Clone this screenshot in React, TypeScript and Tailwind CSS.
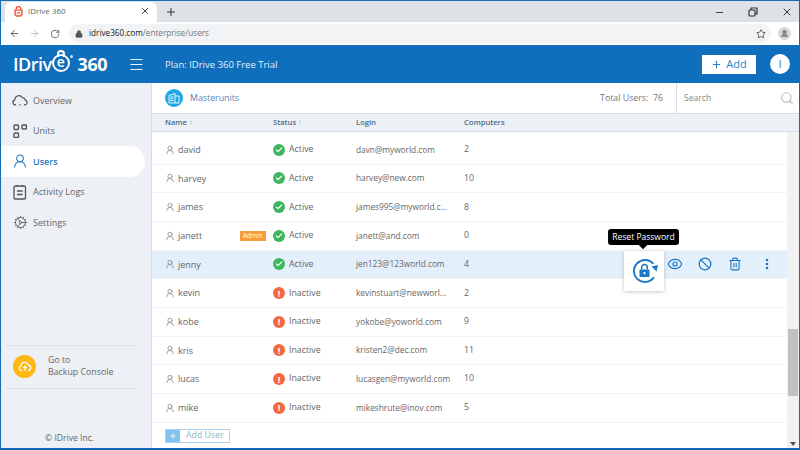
import { ArrowLeft, ArrowRight, RotateCw, Lock, Star, X, Plus, Minus, Menu, Search, Check, Eye, Ban, Trash2, EllipsisVertical, UserRound, Cog } from "lucide-react";

const users = [
  { name: "david", active: true, login: "davn@myworld.com", computers: 2 },
  { name: "harvey", active: true, login: "harvey@new.com", computers: 10 },
  { name: "james", active: true, login: "james995@myworld.c...", computers: 8 },
  { name: "janett", active: true, login: "janett@and.com", computers: 0, admin: true },
  { name: "jenny", active: true, login: "jen123@123world.com", computers: 4, hover: true },
  { name: "kevin", active: false, login: "kevinstuart@newworl...", computers: 2 },
  { name: "kobe", active: false, login: "yokobe@yoworld.com", computers: 9 },
  { name: "kris", active: false, login: "kristen2@dec.com", computers: 11 },
  { name: "lucas", active: false, login: "lucasgen@myworld.com", computers: 10 },
  { name: "mike", active: false, login: "mikeshrute@inov.com", computers: 5 },
];

function CloudIcon() {
  return (
    <svg width="16" height="13" viewBox="0 0 20 16" fill="none" stroke="#555" strokeWidth="1.5">
      <path d="M5 13.5H4a3.2 3.2 0 0 1-.4-6.3A5 5 0 0 1 13 4.6a3.4 3.4 0 0 1 3.6 3 3 3 0 0 1-.6 5.9h-1" />
      <path d="M7 13.5v.5M10 12.5v1.5M13 13.5v.5" />
    </svg>
  );
}

function UnitsIcon() {
  return (
    <svg width="14" height="14" viewBox="0 0 14 14" fill="none" stroke="#555" strokeWidth="1.4">
      <rect x="1" y="1" width="4.5" height="4.5" rx="1" />
      <rect x="9" y="1" width="4.5" height="4" rx="1" />
      <rect x="1" y="9" width="4.5" height="4.5" rx="1" />
    </svg>
  );
}

function LogsIcon() {
  return (
    <svg width="14" height="16" viewBox="0 0 14 16" fill="none" stroke="#555" strokeWidth="1.3">
      <rect x="1" y="2" width="11.5" height="13" rx="1.2" />
      <path d="M4 1v2M9.5 1v2M4 7h5.5M4 10.5h5.5" />
    </svg>
  );
}

function ResetLock() {
  return (
    <svg width="28" height="28" viewBox="0 0 28 28" fill="none">
      <path d="M23.4 6.9A11 11 0 1 0 24 20.3" stroke="#1b78c8" strokeWidth="1.9" />
      <path d="M21.5 9.5 28 8l-1.5 6.5z" fill="#1b78c8" />
      <rect x="9.5" y="12.5" width="10" height="7.5" rx="1" fill="#1b78c8" />
      <path d="M11.7 12.5v-2.2a2.8 2.8 0 0 1 5.6 0v2.2" stroke="#1b78c8" strokeWidth="1.5" />
      <circle cx="14.5" cy="16.2" r="1.1" fill="#fff" />
    </svg>
  );
}

function BuildingBadge() {
  return (
    <span className="flex h-[18px] w-[18px] items-center justify-center rounded-full bg-[#1ea7e4]">
      <svg width="12" height="12" viewBox="0 0 12 12" fill="none" stroke="#fff" strokeWidth="0.9">
        <path d="M1 3.5 7 1.5v9.5H1zM7 4h4v7H7M2.4 5h3M2.4 6.8h3M2.4 8.6h3" />
      </svg>
    </span>
  );
}

function NavItem({ label, icon, active }: { label: string; icon: React.ReactNode; active?: boolean }) {
  return (
    <div className={`mr-[6px] flex h-[30.5px] items-center rounded-r-full pl-[9px] ${active ? "bg-white font-semibold text-[#1f77bd]" : "text-[#666]"}`}>
      <span className="flex w-[20px] justify-center">{icon}</span>
      <span className="ml-[3px] text-[9px]">{label}</span>
    </div>
  );
}

export default function App() {
  return (
    <div className="flex h-[450px] w-[800px] flex-col overflow-hidden border border-b-2 border-[#0f6cb6] bg-white font-['Open_Sans',sans-serif]">
      {/* tab strip */}
      <div className="flex h-[21px] shrink-0 items-end bg-[#dee1e6]">
        <div className="ml-[4px] flex h-[20px] w-[152px] items-center rounded-t-md bg-white pb-[2px] pl-[9px] pr-[7px]">
          <svg width="9" height="11" viewBox="0 0 10 12" fill="none" stroke="#f0583a" strokeWidth="1.6">
            <path d="M2.5 4V3a2.5 2.5 0 0 1 5 0v1M1.2 4.5h7.6v5L7 11H3L1.2 9.5zM3 7.5h4" />
          </svg>
          <span className="ml-[5px] text-[8px] text-[#666]">IDrive 360</span>
          <X className="ml-auto" size={10} color="#444" strokeWidth={2.4} />
        </div>
        <Plus className="mb-[4px] ml-[8px]" size={12} color="#333" strokeWidth={2} />
        <div className="mb-[4px] ml-auto flex items-center text-[#333]">
          <Minus size={11} />
          <svg className="ml-[23px]" width="10" height="10" viewBox="0 0 10 10" fill="none" stroke="#333" strokeWidth="1.2">
            <rect x="1" y="3" width="6" height="6" rx="1" />
            <path d="M3 3V1h6v6H7" />
          </svg>
          <X className="ml-[23px] mr-[6px]" size={12} />
        </div>
      </div>
      {/* address bar */}
      <div className="flex h-[23px] shrink-0 items-center bg-white pl-[8px] pr-[8px]">
        <ArrowLeft size={11} color="#555" strokeWidth={2} />
        <ArrowRight className="ml-[9px]" size={11} color="#bbb" strokeWidth={2} />
        <RotateCw className="ml-[10px]" size={10} color="#555" strokeWidth={2} />
        <div className="ml-[9px] flex h-[19px] flex-1 items-center rounded-full bg-[#f1f3f4] pl-[6px] pr-[5px]">
          <Lock size={8} color="#555" fill="#555" />
          <span className="ml-[6px] text-[8.2px] text-[#222]">
            idrive360.com<span className="text-[#777]">/enterprise/users</span>
          </span>
          <Star className="ml-auto" size={10} color="#444" />
        </div>
        <span className="ml-[7px] flex h-[13px] w-[13px] items-center justify-center rounded-full bg-[#d8d8d8]">
          <UserRound size={9} color="#888" fill="#888" />
        </span>
      </div>
      {/* app header */}
      <div className="flex h-[38px] shrink-0 items-center bg-[#0f6fbc] pl-[12px] pr-[9px] text-white">
        <span className="flex items-center text-[18px] font-semibold leading-none tracking-[-0.5px]">
          IDriv
          <span className="relative -mt-[2px] flex h-[18px] w-[18px] items-center justify-center rounded-full border-2 border-white text-[14px] leading-none">
            <span className="-mt-[3px]">e</span>
            <span className="absolute -top-[6px] left-[3px] h-[7px] w-[8px] rounded-t-full border-2 border-b-0 border-white" />
            <span className="absolute -right-[5px] -top-[1px] h-[3px] w-[3px] rounded-full bg-[#cfe3f4]" />
          </span>
          <span className="ml-[8px] font-bold">360</span>
        </span>
        <Menu className="ml-[21px]" size={17} strokeWidth={1.3} />
        <span className="ml-[20px] mt-[2px] text-[9.5px] font-medium text-[#e3f0fa]">Plan: IDrive 360 Free Trial</span>
        <div className="ml-auto flex h-[19px] w-[54px] items-center justify-center bg-white text-[11px] text-[#2a7fc4]">
          <Plus size={11} strokeWidth={2.4} />
          <span className="ml-[4px]">Add</span>
        </div>
        <span className="ml-[14px] flex h-[20px] w-[20px] items-center justify-center rounded-full bg-white text-[11px] text-[#2a7fc4]">I</span>
      </div>
      <div className="flex min-h-0 flex-1">
        {/* sidebar */}
        <aside className="flex w-[151px] shrink-0 flex-col border-r border-[#d5dee7] bg-[#edf1f5] pt-[2px]">
          <NavItem label="Overview" icon={<CloudIcon />} />
          <NavItem label="Units" icon={<UnitsIcon />} />
          <NavItem label="Users" active icon={<UserRound size={16} color="#1f77bd" strokeWidth={1.6} />} />
          <NavItem label="Activity Logs" icon={<LogsIcon />} />
          <NavItem label="Settings" icon={<Cog size={15} color="#555" strokeWidth={1.3} />} />
          <div className="ml-[4px] mr-[13px] mt-[107px] flex h-[44px] items-center border-y border-[#dbe3ea] pl-[8px]">
            <span className="flex h-[23px] w-[23px] items-center justify-center rounded-full bg-[#fdb813]">
              <svg width="14" height="11" viewBox="0 0 14 11" fill="none" stroke="#fff" strokeWidth="1.3">
                <path d="M4 9.5H3.2A2.4 2.4 0 0 1 3 4.8 3.6 3.6 0 0 1 10 3.8a2.9 2.9 0 0 1 .6 5.7H10M7 10V5.5M5.2 7 7 5.2 8.8 7" />
              </svg>
            </span>
            <span className="ml-[12px] text-[8.8px] leading-[11.5px] text-[#666]">
              Go to
              <br />
              Backup Console
            </span>
          </div>
          <div className="mb-[3px] mt-auto pl-[44px] text-[8.6px] text-[#666]">© IDrive Inc.</div>
        </aside>
        {/* main */}
        <main className="flex min-w-0 flex-1 flex-col">
          <div className="flex h-[31px] shrink-0 items-center border-b border-[#d5dee7] pl-[13px]">
            <BuildingBadge />
            <span className="ml-[7px] mt-[1px] text-[8.8px] text-[#5a85b5]">Masterunits</span>
            <span className="ml-auto mt-[1px] text-[8.8px] text-[#777]">Total Users:&nbsp; 76</span>
            <div className="ml-[13px] flex h-full w-[123px] items-center border-l border-[#d5dee7] pl-[7px] pr-[5px]">
              <span className="mt-[1px] text-[8.6px] text-[#888]">Search</span>
              <Search className="ml-auto" size={14} color="#bbb" />
            </div>
          </div>
          <div className="flex h-[18px] shrink-0 items-center border-b border-[#d5dee7] bg-[#edf1f5] pl-[13px] text-[7.6px] font-semibold text-[#4d6b88]">
            <span className="w-[108px]">Name <span className="text-[#5aa9e0]">↑</span></span>
            <span className="w-[83px]">Status <span className="text-[#5aa9e0]">↑</span></span>
            <span className="w-[108px]">Login</span>
            <span>Computers</span>
          </div>
          <div className="flex min-h-0 flex-1">
            <div className="relative flex min-w-0 flex-1 flex-col pt-[4px]">
              {users.map((u) => (
                <div
                  key={u.name}
                  className={`flex h-[28.67px] shrink-0 items-center border-b border-[#f1f3f5] pl-[13px] text-[8.8px] text-[#666] ${u.hover ? "bg-[#e3f0fb]" : ""}`}
                >
                  <span className="flex w-[108px] items-center">
                    <UserRound size={10} color="#777" strokeWidth={1.6} />
                    <span className="ml-[3px] w-[64px] text-[9px]">{u.name}</span>
                    <span className={u.admin ? "-ml-[2px] bg-[#f59c3c] px-[3px] py-[1px] text-[6.5px] leading-[8px] text-white" : "hidden"}>Admin</span>
                  </span>
                  <span className="flex w-[83px] items-center">
                    {u.active ? (
                      <span className="flex h-[12px] w-[12px] items-center justify-center rounded-full bg-[#3eb55f]">
                        <Check size={8} color="#fff" strokeWidth={3.5} />
                      </span>
                    ) : (
                      <span className="flex h-[12px] w-[12px] items-center justify-center rounded-full bg-[#f4683f] text-[9px] font-bold leading-none text-white">!</span>
                    )}
                    <span className="ml-[4px]">{u.active ? "Active" : "Inactive"}</span>
                  </span>
                  <span className="w-[108px] whitespace-nowrap text-[8.3px]">{u.login}</span>
                  <span>{u.computers}</span>
                  {u.hover && (
                    <span className="ml-auto mr-[13px] flex items-center text-[#1b78c8]">
                      <Eye size={16} strokeWidth={1.8} />
                      <Ban className="ml-[15px]" size={14} strokeWidth={2.2} />
                      <Trash2 className="ml-[16px]" size={14} strokeWidth={1.9} />
                      <EllipsisVertical className="ml-[18px]" size={14} strokeWidth={2.4} />
                    </span>
                  )}
                </div>
              ))}
              <div className="ml-[13px] mt-[6px] flex h-[14px] w-[65px] items-center border border-[#a9d3f3] text-[8.8px] text-[#9bb4c9]">
                <span className="flex h-full w-[14px] items-center justify-center bg-[#85c1ee] text-white">
                  <Plus size={8} strokeWidth={2.5} />
                </span>
                <span className="ml-[6px]">Add User</span>
              </div>
              {/* hover popup over the jenny row */}
              <div className="absolute left-[472px] top-[119px] flex h-[40px] w-[40px] items-center justify-center bg-white shadow-[0_1px_4px_rgba(0,0,0,0.22)]">
                <ResetLock />
              </div>
              <div className="absolute left-[456px] top-[97px] flex h-[16px] w-[71px] items-center justify-center rounded-[3px] bg-black text-[8.5px] text-white">
                Reset Password
                <span className="absolute -bottom-[3px] left-[32px] h-[6px] w-[6px] rotate-45 bg-black" />
              </div>
            </div>
            {/* scrollbar */}
            <div className="flex w-[12px] shrink-0 flex-col items-center bg-[#f1f1f1] pb-[2px] pt-[197px]">
              <div className="h-[67px] w-[10px] bg-[#c1c1c1]" />
              <span className="mt-auto h-0 w-0 border-x-[3px] border-t-[4px] border-x-transparent border-t-[#505050]" />
            </div>
          </div>
        </main>
      </div>
    </div>
  );
}
